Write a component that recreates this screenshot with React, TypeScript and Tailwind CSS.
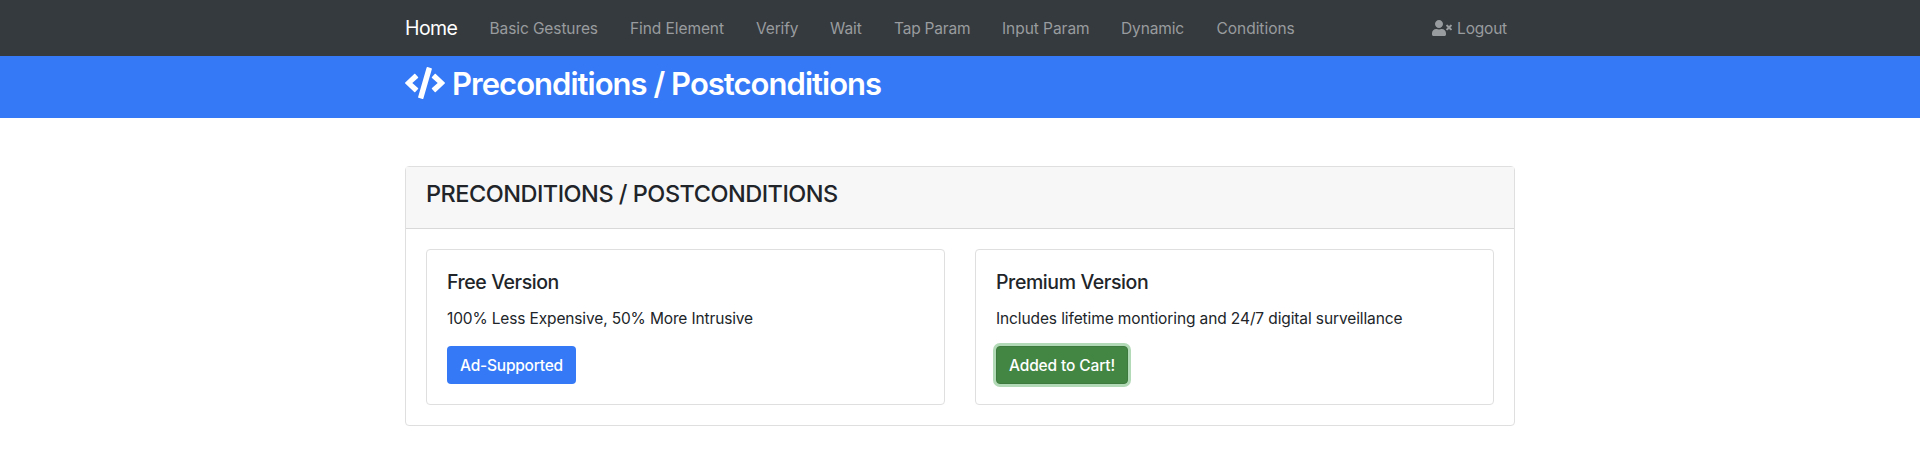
import { FaCode, FaUserTimes } from "react-icons/fa";

const links = [
  ["Basic Gestures", "w-[108.5px] tracking-[-0.1px]"],
  ["Find Element", "w-[94px] tracking-[-0.08px]"],
  ["Verify", "w-[42px] tracking-[-0.15px]"],
  ["Wait", "w-[32px] tracking-[-0.05px]"],
  ["Tap Param", "w-[76px] tracking-[-0.2px]"],
  ["Input Param", "w-[87px] tracking-[-0.05px]"],
  ["Dynamic", "w-[63.5px] tracking-[-0.12px]"],
  ["Conditions", "w-[78px] tracking-[-0.03px]"],
];

export default function App() {
  return (
    <div className="min-h-[474px] bg-white font-['Inter',sans-serif] text-[15.5px] leading-6 text-[#212529]">
      <nav className="h-14 bg-[#353a3e]">
        <div className="mx-auto flex h-full w-[1110px] items-center text-[#999c9e]">
          <a className="mr-8 w-[52.5px] text-[19.5px] tracking-[-0.6px] whitespace-nowrap text-white">Home</a>
          <div className="flex gap-8 pt-0.5">
            {links.map(([label, style]) => (
              <a key={label} className={`whitespace-nowrap ${style}`}>{label}</a>
            ))}
          </div>
          <a className="mr-2 ml-auto flex items-center gap-[5px] pt-0.5 tracking-[-0.2px]">
            <FaUserTimes className="mb-0.5 h-4 w-5" />Logout
          </a>
        </div>
      </nav>
      <header className="h-[62px] bg-[#3579f6] text-white">
        <h1 className="mx-auto flex h-14 w-[1110px] items-center gap-[7px] text-[31px] font-semibold tracking-[-0.97px]">
          <FaCode className="mb-0.5 h-8 w-10" />Preconditions / Postconditions
        </h1>
      </header>
      <main className="mx-auto mt-12 w-[1110px] rounded border border-[#dfdfdf]">
        <div className="h-[62px] border-b border-[#d9d9d9] bg-[#f7f7f7] px-5 pt-3">
          <h3 className="text-[23.5px] leading-[29px] font-medium tracking-[-0.5px]">PRECONDITIONS / POSTCONDITIONS</h3>
        </div>
        <div className="grid grid-cols-2 gap-[30px] p-5">
          <section className="rounded border border-[#dfdfdf] p-5">
            <h5 className="mb-[13px] text-[19.5px] leading-6 font-medium tracking-[-0.42px]">Free Version</h5>
            <p className="mb-[15px] tracking-[-0.14px]">100% Less Expensive, 50% More Intrusive</p>
            <button className="h-[38px] w-[129px] rounded bg-[#3579f6] pt-0.5 font-medium tracking-[-0.22px] text-white">Ad-Supported</button>
          </section>
          <section className="rounded border border-[#dfdfdf] p-5">
            <h5 className="mb-[13px] text-[19.5px] leading-6 font-medium tracking-[-0.4px]">Premium Version</h5>
            <p className="mb-[15px] tracking-[-0.11px]">Includes lifetime montioring and 24/7 digital surveillance</p>
            <button className="h-[38px] w-[132px] rounded border border-[#3d7a3d] bg-[#438643] pt-0.5 font-medium tracking-[-0.13px] text-white ring-3 ring-[#b3dab6]">Added to Cart!</button>
          </section>
        </div>
      </main>
    </div>
  );
}
